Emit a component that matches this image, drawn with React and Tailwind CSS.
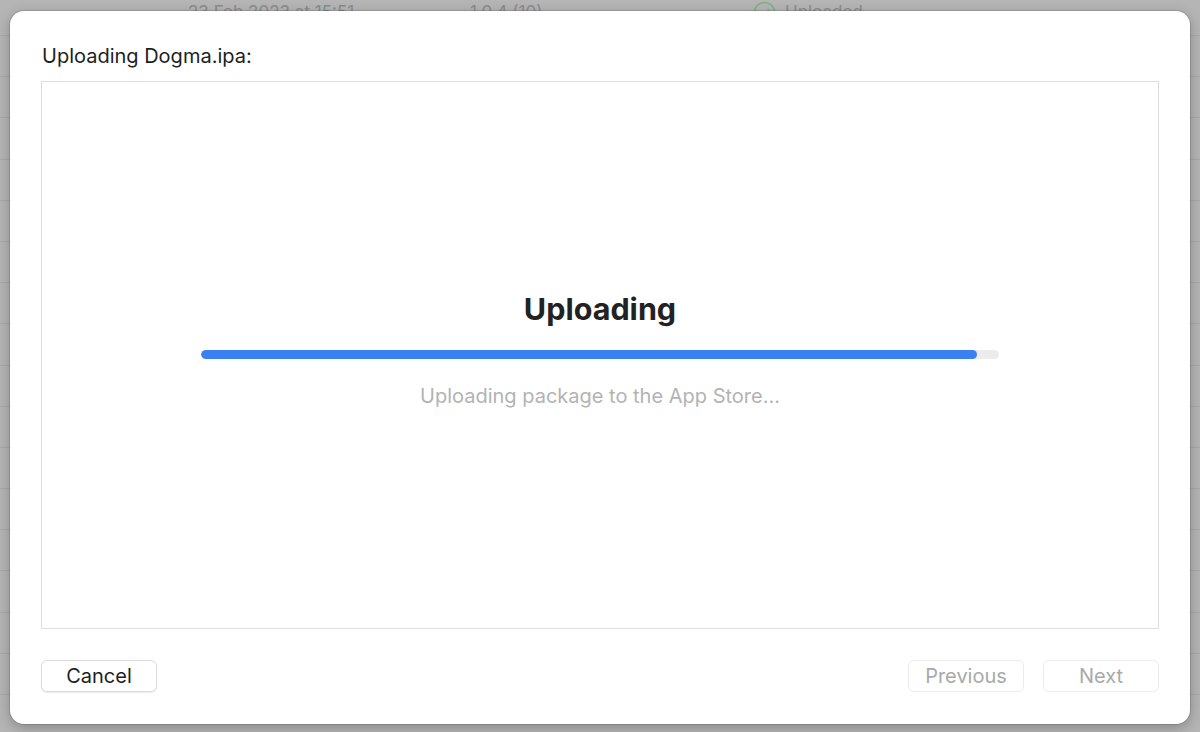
import React from "react";

const rows = Array.from({ length: 17 });

function UploadedMark() {
  return (
    <svg width="23" height="23" viewBox="0 0 24 24" fill="none" stroke="#7fb47f" strokeWidth="1.6">
      <circle cx="12" cy="12" r="10.5" />
      <path d="M7.5 12.5l3 3 6-6.5" strokeLinecap="round" strokeLinejoin="round" />
    </svg>
  );
}

export default function App() {
  const progress = 97.2;

  return (
    <div
      className="relative w-[1200px] h-[732px] overflow-hidden bg-[#b5b5b5]"
      style={{ fontFamily: "Inter, 'Noto Sans', 'Liberation Sans', sans-serif" }}
    >
      {/* build list behind the sheet */}
      <div className="flex flex-col">
        <div className="flex items-center h-[36px] pb-[10px] text-[17px] text-[#8c8c8c] border-b border-[#a9a9a9]">
          <span className="ml-[188px] w-[282px]">23 Feb 2023 at 15:51</span>
          <span className="w-[283px]">1.0.4 (10)</span>
          <UploadedMark />
          <span className="ml-[9px]">Uploaded</span>
        </div>
        {rows.map((_, i) => (
          <div key={i} className="h-[41.2px] border-b border-[#a9a9a9]" />
        ))}
      </div>

      {/* sheet */}
      <div className="absolute left-[10px] top-[11px] w-[1180px] h-[713px] rounded-[14px] bg-white shadow-[0_0_0_1px_rgba(0,0,0,0.12),0_4px_14px_rgba(0,0,0,0.25)] flex flex-col px-[31px] pt-[33px]">
        <div className="text-[20px] leading-[24px] text-[#1e1e1e] pl-[1px]">Uploading Dogma.ipa:</div>

        <div className="mt-[13px] h-[548px] border border-[#dedede] flex flex-col items-center pt-[209px]">
          <div className="text-[30.5px] leading-[36px] font-bold text-[#222]">Uploading</div>
          <div className="mt-[23px] w-[798px] h-[9px] rounded-full bg-[#ececec] overflow-hidden">
            <div className="h-full rounded-full bg-[#3b80f0]" style={{ width: `${progress}%` }} />
          </div>
          <div className="mt-[25px] text-[20px] leading-[24px] text-[#b3b3b3]">
            Uploading package to the App Store…
          </div>
        </div>

        <div className="mt-[31px] flex items-center">
          <button className="w-[116px] h-[32px] rounded-[6px] bg-white border border-[#dcdcdc] shadow-[0_1px_1px_rgba(0,0,0,0.08)] text-[20px] text-[#1e1e1e]">
            Cancel
          </button>
          <div className="ml-auto flex gap-[19px]">
            <button className="w-[116px] h-[32px] rounded-[6px] bg-white border border-[#ececec] text-[20px] text-[#a9a9a9]">
              Previous
            </button>
            <button className="w-[116px] h-[32px] rounded-[6px] bg-white border border-[#ececec] text-[20px] text-[#a9a9a9]">
              Next
            </button>
          </div>
        </div>
      </div>
    </div>
  );
}
